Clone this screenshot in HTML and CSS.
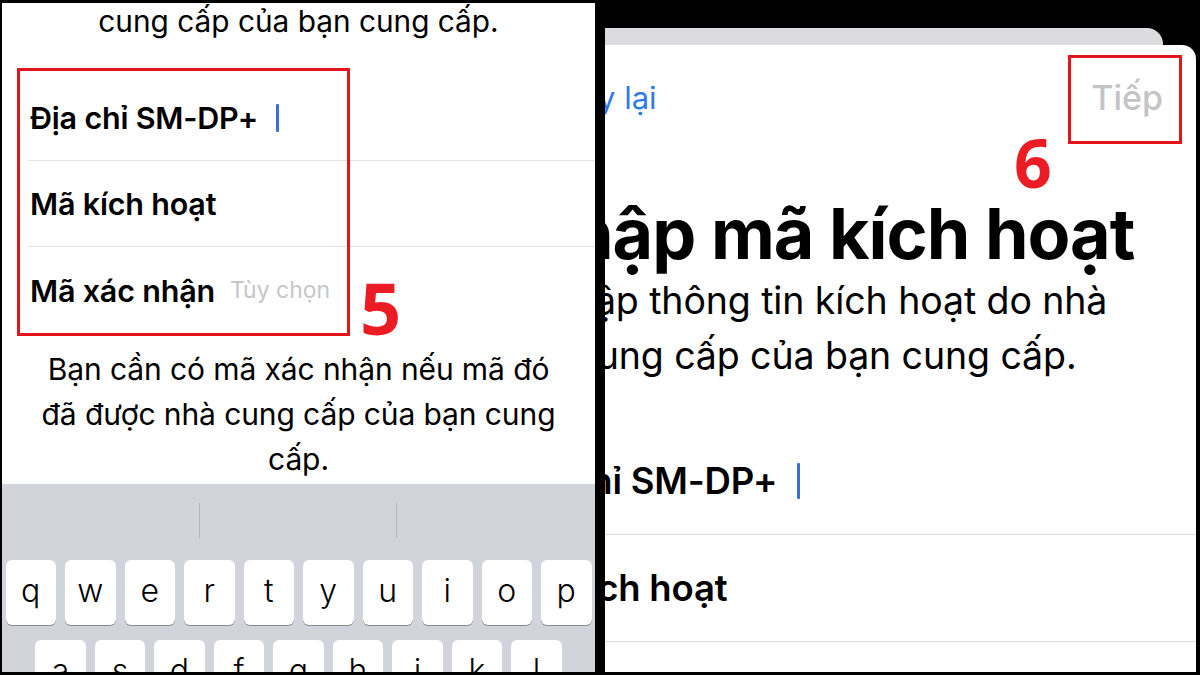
FILE: index.html
```html
<!DOCTYPE html>
<html lang="vi">
<head>
<meta charset="utf-8">
<title>eSIM</title>
<link rel="stylesheet" href="styles.css">
</head>
<body>
<div class="stage">
  <section class="phone left">
    <p class="intro">cung cấp của bạn cung cấp.</p>
    <div class="fields">
      <div class="field"><span class="label">Địa chỉ SM-DP+</span><span class="cursor"></span></div>
      <div class="field"><span class="label">Mã kích hoạt</span></div>
      <div class="field last"><span class="label">Mã xác nhận</span><span class="hint">Tùy chọn</span></div>
    </div>
    <p class="note">Bạn cần có mã xác nhận nếu mã đó<br>đã được nhà cung cấp của bạn cung<br>cấp.</p>
    <div class="keyboard">
      <div class="suggest"><span></span><span></span><span></span></div>
      <div class="keyrow">
        <span class="key">q</span><span class="key">w</span><span class="key">e</span><span class="key">r</span><span class="key">t</span><span class="key">y</span><span class="key">u</span><span class="key">i</span><span class="key">o</span><span class="key">p</span>
      </div>
      <div class="keyrow row2">
        <span class="key">a</span><span class="key">s</span><span class="key">d</span><span class="key">f</span><span class="key">g</span><span class="key">h</span><span class="key">j</span><span class="key">k</span><span class="key">l</span>
      </div>
    </div>
    <div class="mark-box box5"></div>
    <div class="mark-num num5">5</div>
  </section>
  <section class="phone right">
    <div class="sheet-back"></div>
    <div class="sheet">
      <div class="screen">
        <div class="nav"><span class="back">Quay lại</span><span class="next">Tiếp</span></div>
        <h1 class="title">Nhập mã kích hoạt</h1>
        <p class="sub">Nhập thông tin kích hoạt do nhà<br>cung cấp của bạn cung cấp.</p>
        <div class="fields big">
          <div class="field"><span class="label">Địa chỉ SM-DP+</span><span class="cursor"></span></div>
          <div class="field"><span class="label">Mã kích hoạt</span></div>
        </div>
      </div>
    </div>
    <div class="mark-box box6"></div>
    <div class="mark-num num6">6</div>
  </section>
</div>
</body>
</html>
```
FILE: styles.css
```css
* { box-sizing: border-box; margin: 0; padding: 0; }
html, body { width: 1200px; height: 675px; overflow: hidden; background: #000; }
body { font-family: Inter, "Noto Sans", sans-serif; color: #000; }

.stage { display: flex; height: 675px; }

.phone { position: relative; overflow: hidden; display: flex; flex-direction: column; }
.left { margin: 3px 0 3px 2px; width: 593px; height: 669px; background: #fff; }
.right { margin-left: 10px; width: 591px; height: 672px; }

/* left screen */
.intro { font-size: 29.8px; line-height: 36px; text-align: center; }
.fields { margin-top: 36px; }
.field { height: 86px; display: flex; align-items: center; margin-left: 26px; padding-left: 2px; border-bottom: 1px solid #e2e2e4; }
.field.last { border-bottom: none; }
.label { font-size: 30.5px; font-weight: 600; letter-spacing: -0.2px; }
.label + .cursor { margin-left: 18px; }
.hint { font-size: 23px; color: #c6c6c8; margin-left: 15px; }
.cursor { width: 3px; height: 28px; background: #3b6fd8; border-radius: 1px; }
.note { font-size: 30px; line-height: 45px; text-align: center; margin-top: 14px; letter-spacing: -0.1px; }

.keyboard { flex: 1; background: #d1d4da; margin-top: 2px; }
.suggest { height: 76px; display: grid; grid-template-columns: repeat(3, 1fr); }
.suggest span { margin-top: 19px; height: 35px; }
.suggest span:not(:last-child) { border-right: 1px solid #b4b6bb; }
.keyrow { display: flex; justify-content: center; gap: 9px; }
.row2 { margin-top: 15px; }
.key { width: 50.5px; height: 65px; flex: none; background: #fff; border-radius: 6px; box-shadow: 0 1px 0 #8a8b8f; display: flex; align-items: center; justify-content: center; font-size: 32px; font-weight: 300; padding-bottom: 4px; }

/* right screen */
.sheet-back { margin-top: 28px; height: 17px; width: 558px; flex: none; background: #dcdcdf; border-top-right-radius: 16px; }
.sheet { flex: 1; background: #fff; border-top-right-radius: 14px; overflow: hidden; }
.screen { width: 740px; margin-left: -149px; }
.nav { height: 104px; display: flex; justify-content: space-between; align-items: center; padding: 0 33px 0 83px; }
.back { color: #2f7bec; font-size: 31px; }
.next { color: #c4c4c6; font-size: 34px; font-weight: 500; }
.title { font-size: 70px; font-weight: 700; text-align: center; line-height: 78px; margin-top: 46px; letter-spacing: -1px; }
.sub { font-size: 37.5px; line-height: 55px; text-align: center; letter-spacing: -0.1px; }
.big { margin-top: 45px; }
.big .field { height: 107px; margin-left: 0; padding-left: 48px; border-bottom-color: #dadadc; }
.big .label { font-size: 36.5px; }
.big .label + .cursor { height: 36px; margin-left: 20px; }

/* annotations */
.mark-box { position: absolute; border: 3px solid #e3141c; }
.box5 { left: 15px; top: 65px; width: 333px; height: 268px; }
.box6 { left: 463px; top: 55px; width: 114px; height: 89px; }
.mark-num { position: absolute; font-family: "Open Sans", sans-serif; font-weight: 700; color: #ec1c24; line-height: 1; }
.num5 { left: 358px; top: 268px; font-size: 72px; }
.num6 { left: 409px; top: 129px; font-size: 66px; }
```
